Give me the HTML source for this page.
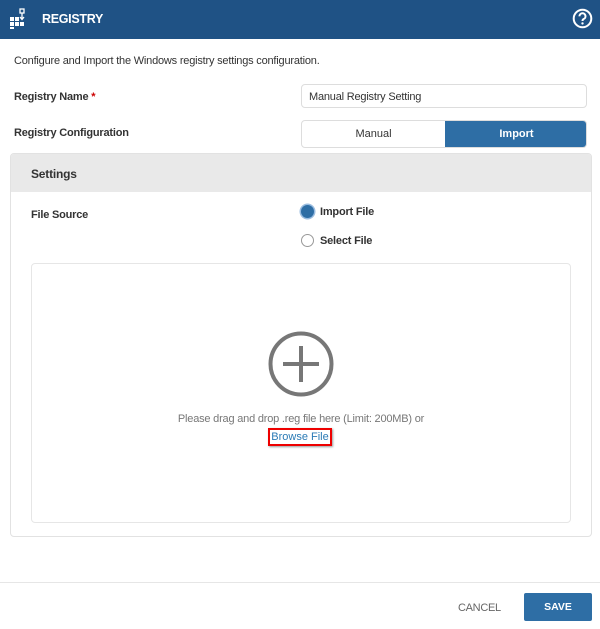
<!DOCTYPE html>
<html><head><style>
*{margin:0;padding:0;box-sizing:border-box}
body{width:600px;height:629px;background:#fff;font-family:"Liberation Sans",sans-serif;font-size:11px;color:#333;position:relative;overflow:hidden}
.a{position:absolute;white-space:nowrap}
.hdr{left:0;top:0;width:600px;height:39px;background:#1f5285}
.lbl{font-weight:bold;font-size:11px;color:#333;letter-spacing:-0.2px}
</style></head><body>
<div class="a hdr"></div>
<svg class="a" style="left:9px;top:8px" width="18" height="22" viewBox="0 0 18 22">
<g fill="#fff"><rect x="1" y="9" width="4" height="4"/><rect x="1" y="14" width="4" height="4"/><rect x="6" y="14" width="4" height="4"/><rect x="11" y="14" width="4" height="4"/><rect x="6" y="9" width="4" height="4" /><rect x="1" y="19" width="4" height="2"/></g>
<rect x="11" y="1" width="4" height="4" fill="none" stroke="#fff" stroke-width="1.3"/>
<path d="M13 5v6M11 9l2 2.5 2-2.5" stroke="#fff" stroke-width="1.3" fill="none"/>
</svg>
<div class="a" style="left:42px;top:12px;color:#fff;font-weight:bold;font-size:12.5px;letter-spacing:-0.3px">REGISTRY</div>
<svg class="a" style="left:572px;top:8px" width="21" height="21" viewBox="0 0 21 21"><circle cx="10.5" cy="10.5" r="8.8" fill="none" stroke="#fff" stroke-width="2"/><path d="M7.5 8.3a3 3 0 1 1 4.2 2.7c-1 .5-1.2 1-1.2 2" stroke="#fff" stroke-width="2" fill="none"/><circle cx="10.5" cy="15.4" r="1.2" fill="#fff"/></svg>
<div class="a" style="left:14px;top:55px;letter-spacing:-0.2px">Configure and Import the Windows registry settings configuration.</div>
<div class="a lbl" style="left:14px;top:91px">Registry Name <span style="color:#c00">*</span></div>
<div class="a" style="left:301px;top:84px;width:286px;height:24px;border:1px solid #ddd;border-radius:4px;padding:6px 7px;letter-spacing:-0.2px">Manual Registry Setting</div>
<div class="a lbl" style="left:14px;top:127px">Registry Configuration</div>
<div class="a" style="left:301px;top:120px;width:286px;height:28px;border:1px solid #ddd;border-radius:4px;overflow:hidden">
<div class="a" style="left:0;top:0;width:143px;height:26px;text-align:center;line-height:27px">Manual</div>
<div class="a" style="left:143px;top:0;width:143px;height:26px;background:#2e6ea5;color:#fff;font-weight:bold;text-align:center;line-height:27px">Import</div></div>
<div class="a" style="left:10px;top:153px;width:582px;height:384px;border:1px solid #e2e2e2;border-radius:4px;overflow:hidden">
<div class="a" style="left:0;top:0;width:582px;height:38px;background:#e9e9e9"></div>
<div class="a lbl" style="left:20px;top:13px;font-size:12px">Settings</div>
<div class="a lbl" style="left:20px;top:55px">File Source</div>
<div class="a" style="left:290px;top:51px;width:13px;height:13px;border-radius:50%;background:#2e6ea5;box-shadow:0 0 0 1.5px #9bbde0"></div>
<div class="a lbl" style="left:309px;top:52px">Import File</div>
<div class="a" style="left:290px;top:80px;width:13px;height:13px;border-radius:50%;border:1px solid #999"></div>
<div class="a lbl" style="left:309px;top:81px">Select File</div>
<div class="a" style="left:20px;top:109px;width:540px;height:260px;border:1px solid #e6e6e6;border-radius:4px"></div>
</div>
<svg class="a" style="left:267px;top:330px" width="68" height="68" viewBox="0 0 68 68"><circle cx="34" cy="34" r="30.5" fill="none" stroke="#777" stroke-width="4"/><path d="M34 16v36M16 34h36" stroke="#777" stroke-width="4"/></svg>
<div class="a" style="left:0;width:602px;top:413px;text-align:center;color:#777;letter-spacing:-0.2px">Please drag and drop .reg file here (Limit: 200MB) or</div>
<div class="a" style="left:268px;top:428px;width:64px;height:18px;border:2px solid #e00;box-shadow:1px 1px 2px #999;color:#2a7ab5;text-align:center;line-height:15px">Browse File</div>
<div class="a" style="left:0;top:582px;width:600px;height:1px;background:#e6e6e6"></div>
<div class="a" style="left:458px;top:602px;color:#666;letter-spacing:-0.3px">CANCEL</div>
<div class="a" style="left:524px;top:593px;width:68px;height:28px;background:#2e6ea5;border-radius:2px;color:#fff;font-weight:bold;text-align:center;line-height:29px;font-size:10.5px">SAVE</div>
</body></html>
